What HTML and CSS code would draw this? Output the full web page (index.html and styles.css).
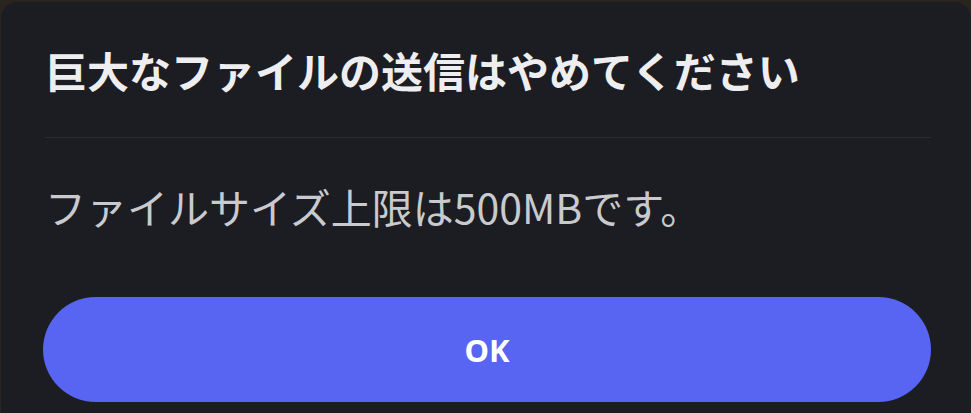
FILE: index.html
```html
<!DOCTYPE html>
<html lang="ja">
<head>
    <meta charset="UTF-8">
    <meta name="viewport" content="width=device-width, initial-scale=1">
    <title>巨大なファイルの送信はやめてください</title>
    <link rel="stylesheet" href="styles.css">
</head>
<body>

    <div class="modal">
        <div class="modal-header">
            <h1 class="title">巨大なファイルの送信はやめてください</h1>
        </div>

        <div class="modal-body">
            <p class="message">ファイルサイズ上限は500MBです。</p>
        </div>

        <div class="modal-footer">
            <button class="btn-ok" type="button">OK</button>
        </div>
    </div>

</body>
</html>
```

FILE: styles.css
```css
* {box-sizing: border-box}
html, body {height: 100%}
body {
    margin: 0;
    background-color: #2a241e;
    font-family: "Noto Sans CJK JP", "Noto Sans", sans-serif;
    overflow: hidden;
}

/* ----- Modal ----- */

.modal {
    margin: 2px 0 0 1px;
    height: 100%;
    background-color: #1c1d22;
    border-radius: 16px 16px 0 0;
    padding: 0 40px 0 44px;
}

.modal-header {
    padding-top: 46px;
    padding-bottom: 45px;
    border-bottom: 1px solid #2b2c31;
}

.title {
    margin: 0;
    font-size: 42px;
    line-height: 44px;
    font-weight: 700;
    color: #eeeef0;
}

.modal-body {
    padding: 46px 0 69px;
}

.message {
    margin: 0;
    font-size: 41px;
    line-height: 44px;
    font-weight: 400;
    color: #c9cace;
}

/* ----- Bouton ----- */

.btn-ok {
    display: flex;
    justify-content: center;
    align-items: center;
    width: calc(100% + 2px);
    height: 105px;
    margin-left: -2px;
    border: none;
    border-radius: 53px;
    background-color: #5865f2;
    color: #ffffff;
    font-family: "Noto Sans", sans-serif;
    font-size: 31px;
    font-weight: 700;
    cursor: pointer;
}
```
